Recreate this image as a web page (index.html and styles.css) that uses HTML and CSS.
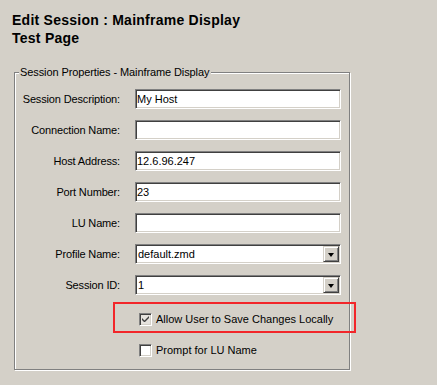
FILE: index.html
```html
<!DOCTYPE html>
<html lang="en">
<head>
    <meta charset="UTF-8">
    <meta name="viewport" content="width=device-width, initial-scale=1.0">
    <title>Edit Session : Mainframe Display</title>
    <link rel="stylesheet" href="styles.css">
</head>
<body>
<div class="page">
    <h1 class="title">Edit Session : Mainframe Display<br>Test Page</h1>

    <div class="group">
        <div class="group-title">Session Properties - Mainframe Display</div>
        <div class="form">
            <label class="label">Session Description:</label>
            <input class="field" type="text" value="My Host">

            <label class="label">Connection Name:</label>
            <input class="field" type="text" value="">

            <label class="label">Host Address:</label>
            <input class="field" type="text" value="12.6.96.247">

            <label class="label">Port Number:</label>
            <input class="field" type="text" value="23">

            <label class="label">LU Name:</label>
            <input class="field" type="text" value="">

            <label class="label">Profile Name:</label>
            <div class="field combo"><span class="combo-value">default.zmd</span><span class="drop"><span class="arrow"></span></span></div>

            <label class="label">Session ID:</label>
            <div class="field combo"><span class="combo-value">1</span><span class="drop"><span class="arrow"></span></span></div>

            <div class="check-row first">
                <span class="box checked">
                    <svg width="7" height="7" viewBox="0 0 7 7"><path d="M0 2 L0 4 L2 6 L3 6 L7 2 L7 0 L2.5 4.5 Z" fill="#404040"/></svg>
                </span>
                <span>Allow User to Save Changes Locally</span>
            </div>
            <div class="check-row">
                <span class="box"></span>
                <span>Prompt for LU Name</span>
            </div>
        </div>
    </div>

    <div class="callout"></div>
</div>
</body>
</html>
```

FILE: styles.css
```css
body { margin: 0; background: #d4d0c8; color: #000; font-family: "Liberation Sans", Arial, sans-serif; font-size: 11px; }
.page { position: relative; width: 437px; height: 385px; overflow: hidden; }
.title { margin: 0; padding: 11px 0 0 12px; font-size: 14px; line-height: 18px; font-weight: bold; letter-spacing: 0.25px; }

/* group box, etched like a classic windows frame */
.group { margin: 25px 0 0 14px; width: 334px; border: 1px solid #808080; box-shadow: inset 1px 1px 0 #fff, 1px 1px 0 #fff; }
.group-title { display: table; margin: -7px 0 0 4px; padding: 0 2px 0 1px; line-height: 13px; background: #d4d0c8; letter-spacing: -0.1px; }

.form { display: grid; grid-template-columns: 105px 206px; column-gap: 15px; row-gap: 11px; padding: 10px 0 9px; align-items: center; }
.label { text-align: right; line-height: 20px; letter-spacing: -0.15px; }
.field { box-sizing: border-box; height: 20px; width: 206px; margin: 0; padding: 0 1px; font: 11px "Liberation Sans", Arial, sans-serif; color: #000; background: #fff; outline: none;
  border-top: 1px solid #808080; border-left: 1px solid #808080; border-right: 1px solid #fff; border-bottom: 1px solid #fff;
  box-shadow: inset 1px 1px 0 #404040, inset -1px -1px 0 #d4d0c8; }
.combo { display: flex; align-items: center; padding: 1px 1px 1px 2px; }
.combo-value { flex: 1; }
.drop { box-sizing: border-box; width: 16px; height: 16px; display: flex; align-items: center; justify-content: center; background: #d4d0c8;
  border-top: 1px solid #d4d0c8; border-left: 1px solid #d4d0c8; border-right: 1px solid #404040; border-bottom: 1px solid #404040;
  box-shadow: inset 1px 1px 0 #fff, inset -1px -1px 0 #808080; }
.arrow { width: 0; height: 0; border-left: 3.5px solid transparent; border-right: 3.5px solid transparent; border-top: 4px solid #000; margin-top: 1px; }

.check-row { grid-column: 2; display: flex; align-items: center; gap: 4px; height: 20px; padding-left: 4px; }
.check-row.first { margin-top: 3px; }
.box { box-sizing: border-box; width: 13px; height: 13px; display: flex; align-items: center; justify-content: center; background: #fff;
  border-top: 1px solid #808080; border-left: 1px solid #808080; border-right: 1px solid #fff; border-bottom: 1px solid #fff;
  box-shadow: inset 1px 1px 0 #404040, inset -1px -1px 0 #d4d0c8; }
.box.checked { background: #e6e3de; }

/* red annotation drawn over the form */
.callout { position: absolute; left: 113px; top: 302px; width: 239px; height: 27px; border: 2px solid #f2262a; }
```
